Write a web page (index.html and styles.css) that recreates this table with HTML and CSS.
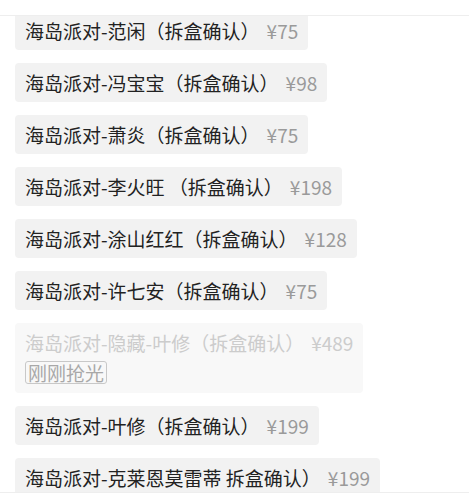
FILE: index.html
```html
<!DOCTYPE html>
<html lang="zh-CN">
<head>
    <meta charset="UTF-8">
    <meta name="viewport" content="width=device-width, initial-scale=1.0">
    <title>海岛派对</title>
    <link rel="stylesheet" href="styles.css">
</head>
<body>

    <div class="top-bar"></div>

    <div class="sku-list">
        <div class="sku"><span class="name">海岛派对-范闲（拆盒确认）</span><span class="price">¥75</span></div>
        <div class="sku"><span class="name">海岛派对-冯宝宝（拆盒确认）</span><span class="price">¥98</span></div>
        <div class="sku"><span class="name">海岛派对-萧炎（拆盒确认）</span><span class="price">¥75</span></div>
        <div class="sku"><span class="name">海岛派对-李火旺 （拆盒确认）</span><span class="price">¥198</span></div>
        <div class="sku"><span class="name">海岛派对-涂山红红（拆盒确认）</span><span class="price">¥128</span></div>
        <div class="sku"><span class="name">海岛派对-许七安（拆盒确认）</span><span class="price">¥75</span></div>
        <div class="sku sold-out">
            <div><span class="name">海岛派对-隐藏-叶修（拆盒确认）</span><span class="price">¥489</span></div>
            <span class="tag">刚刚抢光</span>
        </div>
        <div class="sku"><span class="name">海岛派对-叶修（拆盒确认）</span><span class="price">¥199</span></div>
        <div class="sku"><span class="name">海岛派对-克莱恩莫雷蒂 拆盒确认）</span><span class="price">¥199</span></div>
    </div>

    <div class="bottom-bar"></div>

</body>
</html>
```

FILE: styles.css
```css
body {
    font-family: "Noto Sans CJK SC", "Noto Sans", sans-serif;
    background-color: #fff;
    margin: 0;
    height: 500px;
    overflow: hidden;
    position: relative;
}

.top-bar {
    position: absolute;
    top: 0;
    left: 0;
    right: 0;
    height: 15px;
    background: #fff;
    border-bottom: 1px solid #eee;
    z-index: 2;
}

.bottom-bar {
    position: absolute;
    top: 492px;
    left: 0;
    right: 0;
    bottom: 0;
    background: #fff;
    border-top: 1px solid #eee;
    z-index: 2;
}

.sku-list {
    display: flex;
    flex-direction: column;
    align-items: flex-start;
    gap: 13px;
    padding: 11px 15px;
}

.sku {
    background: #f2f2f2;
    border-radius: 4px;
    padding: 8px 10px;
    font-size: 19px;
    line-height: 23px;
    color: #222;
    white-space: nowrap;
}

.price {
    color: #9a9a9a;
    margin-left: 7px;
}

.sku.sold-out {
    background: #f8f8f8;
    color: #ccc;
    padding-bottom: 9px;
}

.sku.sold-out .price {
    color: #ccc;
}

.tag {
    display: inline-block;
    margin-top: 7px;
    padding: 0 2px;
    border: 1px solid #c8c8c8;
    border-radius: 3px;
    color: #a8a8a8;
    line-height: 21px;
}
```
